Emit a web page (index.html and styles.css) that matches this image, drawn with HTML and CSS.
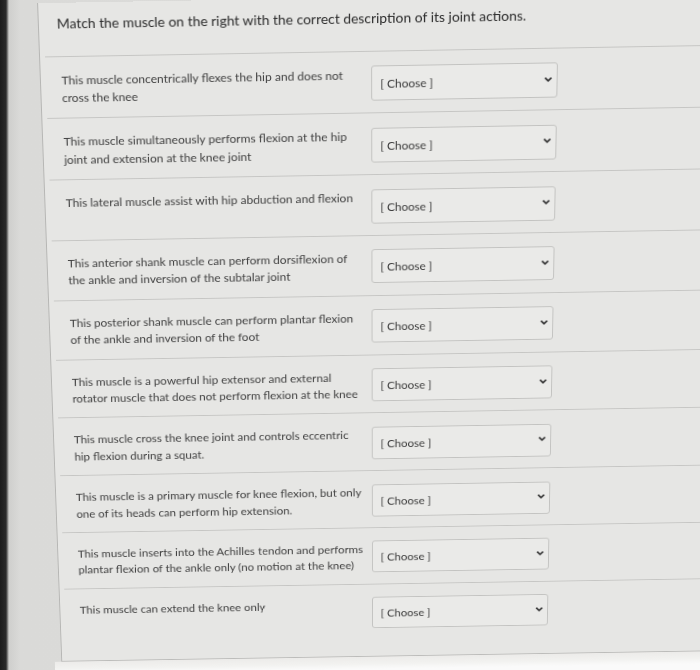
FILE: index.html
```html
<!DOCTYPE html>
<html lang="en">
<head>
<meta charset="utf-8">
<title>Matching question</title>
<link rel="stylesheet" href="styles.css">
</head>
<body>
<div class="stage">
  <div class="card">
    <div class="title">Match the muscle on the right with the correct description of its joint actions.</div>
    <div class="rows">
      <div class="row">
        <div class="desc">This muscle concentrically flexes the hip and does not<br>cross the knee</div>
        <div class="select"><span>[ Choose ]</span><svg viewBox="0 0 10 7"><path d="M1.5 1.5 L5 5 L8.5 1.5"/></svg></div>
      </div>
      <div class="row">
        <div class="desc">This muscle simultaneously performs flexion at the hip<br>joint and extension at the knee joint</div>
        <div class="select"><span>[ Choose ]</span><svg viewBox="0 0 10 7"><path d="M1.5 1.5 L5 5 L8.5 1.5"/></svg></div>
      </div>
      <div class="row">
        <div class="desc">This lateral muscle assist with hip abduction and flexion</div>
        <div class="select"><span>[ Choose ]</span><svg viewBox="0 0 10 7"><path d="M1.5 1.5 L5 5 L8.5 1.5"/></svg></div>
      </div>
      <div class="row">
        <div class="desc">This anterior shank muscle can perform dorsiflexion of<br>the ankle and inversion of the subtalar joint</div>
        <div class="select"><span>[ Choose ]</span><svg viewBox="0 0 10 7"><path d="M1.5 1.5 L5 5 L8.5 1.5"/></svg></div>
      </div>
      <div class="row">
        <div class="desc">This posterior shank muscle can perform plantar flexion<br>of the ankle and inversion of the foot</div>
        <div class="select"><span>[ Choose ]</span><svg viewBox="0 0 10 7"><path d="M1.5 1.5 L5 5 L8.5 1.5"/></svg></div>
      </div>
      <div class="row">
        <div class="desc">This muscle is a powerful hip extensor and external<br>rotator muscle that does not perform flexion at the knee</div>
        <div class="select"><span>[ Choose ]</span><svg viewBox="0 0 10 7"><path d="M1.5 1.5 L5 5 L8.5 1.5"/></svg></div>
      </div>
      <div class="row">
        <div class="desc">This muscle cross the knee joint and controls eccentric<br>hip flexion during a squat.</div>
        <div class="select"><span>[ Choose ]</span><svg viewBox="0 0 10 7"><path d="M1.5 1.5 L5 5 L8.5 1.5"/></svg></div>
      </div>
      <div class="row">
        <div class="desc">This muscle is a primary muscle for knee flexion, but only<br>one of its heads can perform hip extension.</div>
        <div class="select"><span>[ Choose ]</span><svg viewBox="0 0 10 7"><path d="M1.5 1.5 L5 5 L8.5 1.5"/></svg></div>
      </div>
      <div class="row">
        <div class="desc">This muscle inserts into the Achilles tendon and performs<br>plantar flexion of the ankle only (no motion at the knee)</div>
        <div class="select"><span>[ Choose ]</span><svg viewBox="0 0 10 7"><path d="M1.5 1.5 L5 5 L8.5 1.5"/></svg></div>
      </div>
      <div class="row">
        <div class="desc">This muscle can extend the knee only</div>
        <div class="select"><span>[ Choose ]</span><svg viewBox="0 0 10 7"><path d="M1.5 1.5 L5 5 L8.5 1.5"/></svg></div>
      </div>
    </div>
  </div>
  <div class="below"></div>
</div>
</body>
</html>
```
FILE: styles.css
```css
html, body {
  margin: 0;
  padding: 0;
}
body {
  width: 700px;
  height: 670px;
  overflow: hidden;
  background: linear-gradient(90deg, #1c1c1c 0, #2a2a2a 6px, #cfcfcd 9px, #dadad8 20px, #dcdcda 100%);
  font-family: Lato, "Open Sans", "Liberation Sans", sans-serif;
}
.stage {
  width: 820px;
  transform-origin: 220px 0;
  transform: perspective(1000px) rotateX(-6deg) rotate(-1deg);
}
.card {
  margin-left: 37px;
  border-left: 1px solid #b6b6b4;
  border-bottom: 1px solid #bcbcba;
  background: #e6e6e4;
  padding: 10.6px 0 19px 0;
}
.title {
  margin-left: 18px;
  margin-bottom: 23px;
  font-size: 13.9px;
  line-height: 20px;
  color: #2c2c2c;
}
.rows {
  margin-left: 5px;
}
.row {
  height: 63.8px;
  box-sizing: border-box;
  border-top: 1px solid #c6c6c4;
  padding: 15px 0 0 15.7px;
  display: flex;
  align-items: flex-start;
}
.desc {
  width: 312.5px;
  font-size: 12.1px;
  line-height: 18.5px;
  color: #3e3e3e;
  white-space: nowrap;
}
.select {
  width: 188px;
  height: 36px;
  box-sizing: border-box;
  margin-top: -0.5px;
  border: 1px solid #c3c3c1;
  border-radius: 3px;
  background: #eaeae8;
  display: flex;
  align-items: center;
  justify-content: space-between;
  padding: 1px 4px 0 8px;
  font-size: 12px;
  color: #3a3a3a;
}
.select svg {
  width: 9px;
  height: 7px;
  margin-bottom: 3px;
}
.select svg path {
  fill: none;
  stroke: #333;
  stroke-width: 2;
}
.below {
  height: 30px;
  margin-left: 30px;
  background: linear-gradient(180deg, #ecebe9 0, #f2f2f0 8px, #fafafa 14px);
}
```
